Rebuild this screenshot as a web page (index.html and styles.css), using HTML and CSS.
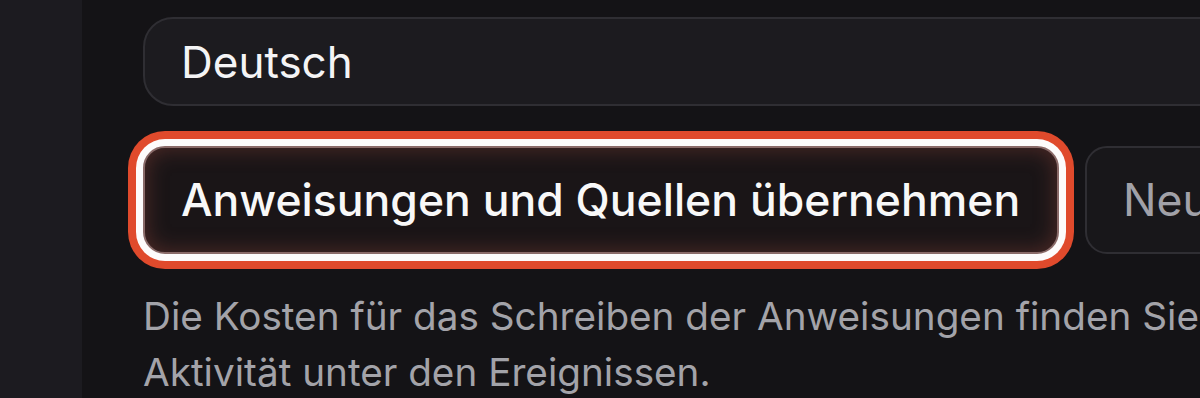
FILE: index.html
```html
<!DOCTYPE html>
<html lang="de">

<head>
    <meta charset="utf-8">
    <meta name="viewport" content="width=device-width, initial-scale=1.0">
    <title>Anweisungen</title>

    <link rel="stylesheet" href="styles.css">
</head>

<body>

    <div class="seite">
        <aside class="seitenleiste"></aside>

        <main class="inhalt">
            <div class="sprache">Deutsch</div>

            <div class="knoepfe">
                <button class="knopf aktiv">Anweisungen und Quellen übernehmen</button>
                <button class="knopf">Neu generieren</button>
            </div>

            <p class="hinweis">Die Kosten für das Schreiben der Anweisungen finden Sie in der Aktivität unter den Ereignissen.</p>
        </main>
    </div>

</body>

</html>
```

FILE: styles.css
```css
html,
body {
    margin: 0;
    height: 100%;
    overflow: hidden;
    background-color: #141316;
    font-family: 'Inter', 'Liberation Sans', sans-serif;
}

.seite {
    display: flex;
    height: 100%;
}

.seitenleiste {
    flex: 0 0 82px;
    background-color: #1c1b20;
}

.inhalt {
    flex: 0 0 1300px;
    padding: 17px 0 0 61px;
}

/* SPRACHE */
.sprache {
    box-sizing: border-box;
    height: 89px;
    border: 2px solid #2f2e33;
    border-radius: 30px;
    background-color: #1c1b1f;
    color: #f4f4f5;
    font-size: 44px;
    padding-left: 36px;
    display: flex;
    align-items: center;
}

/* KNOEPFE */
.knoepfe {
    display: flex;
    gap: 26px;
    margin-top: 40px;
}

.knopf {
    box-sizing: border-box;
    height: 108px;
    padding: 0 36px;
    border: 2px solid #2f2e33;
    border-radius: 22px;
    background-color: #18171a;
    color: #a1a1a8;
    font-family: inherit;
    font-size: 44.5px;
    font-weight: 400;
    white-space: nowrap;
}

.aktiv {
    width: 916px;
    color: #f8f8f8;
    font-weight: 500;
    text-align: left;
    background-color: #1a1517;
    border-color: #8a6a68;
    box-shadow: inset 0 0 22px rgba(150, 70, 60, 0.45), 0 0 0 7px #fdfbfb, 0 0 0 15px #e04a2c;
}

/* HINWEIS */
.hinweis {
    margin: 34px 0 0 0;
    width: 1240px;
    color: #a3a3a9;
    font-size: 38.7px;
    line-height: 56px;
}
```
